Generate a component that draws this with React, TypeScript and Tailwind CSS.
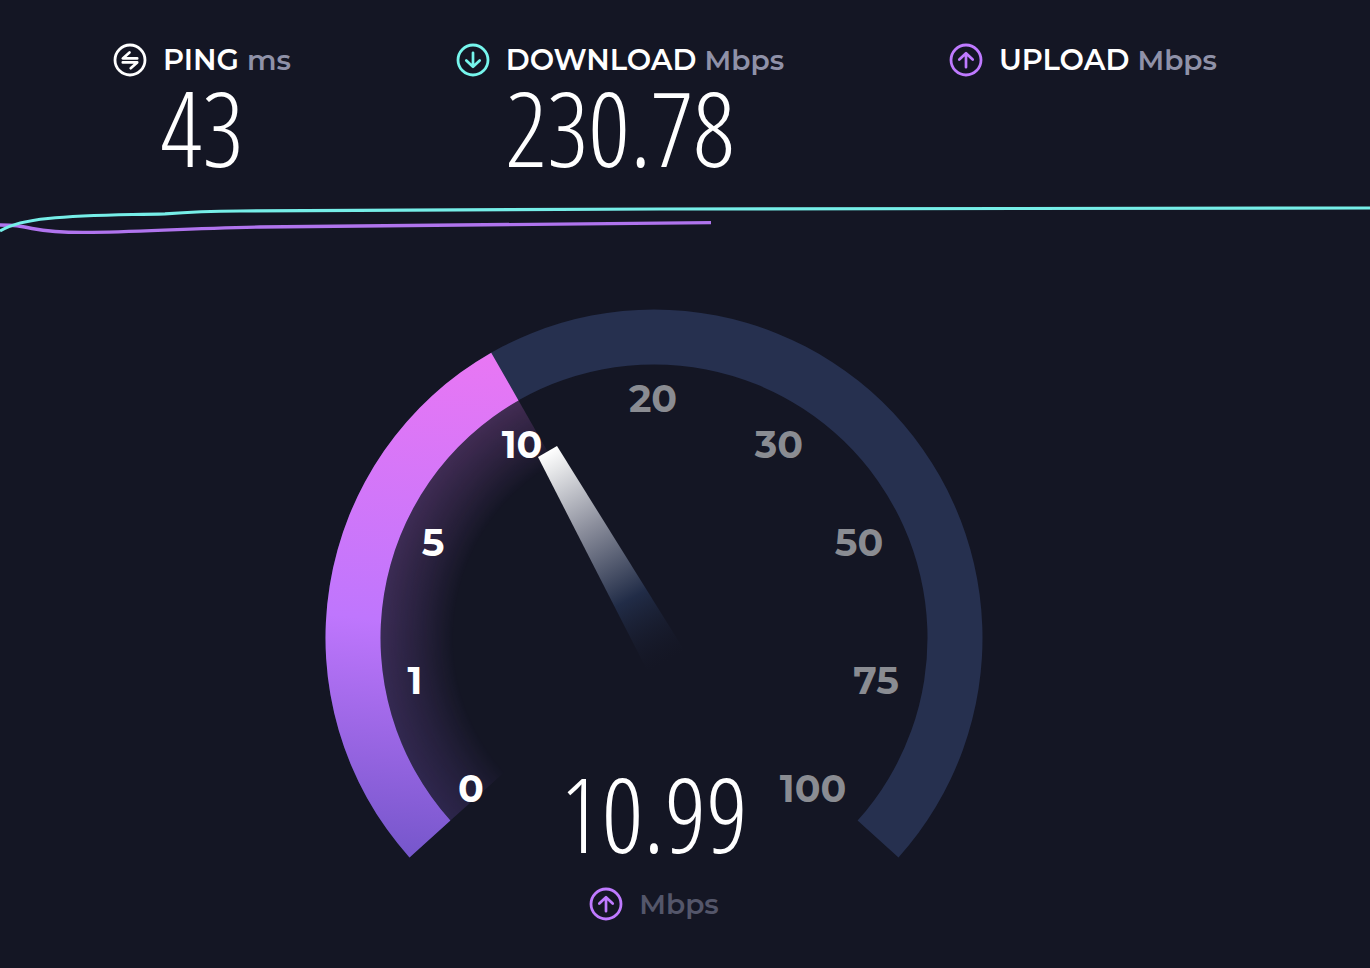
import type { ReactNode } from 'react';

const labelFont = "font-['Montserrat','Lato',sans-serif]";
const digitFont = "font-['Open_Sans_Condensed_Light','Roboto_Condensed',sans-serif] font-light";

type IconKind = 'ping' | 'download' | 'upload';

const iconPaths: Record<IconKind, string> = {
  ping: 'M16.5 9.5 L9.8 15.4 H24.2 M9.8 19.4 H24.2 L17.7 25.2',
  download: 'M17 9.8 V23.5 M10.3 17.5 L17 23.8 L23.7 17.5',
  upload: 'M17 24.2 V10.5 M10.3 16.5 L17 10.2 L23.7 16.5',
};

const iconColors: Record<IconKind, string> = {
  ping: 'text-white',
  download: 'text-[#76f5ec]',
  upload: 'text-[#bf7aff]',
};

function CircleIcon({ kind }: { kind: IconKind }) {
  return (
    <svg
      className={`size-[34px] shrink-0 ${iconColors[kind]}`}
      viewBox="0 0 34 34"
      fill="none"
      stroke="currentColor"
      strokeLinecap="round"
      strokeLinejoin="round"
      aria-hidden="true"
    >
      <circle cx="17" cy="17" r="15" strokeWidth="2.8" />
      <path d={iconPaths[kind]} strokeWidth="2.7" />
    </svg>
  );
}

function Metric({ kind, name, unit, children }: { kind: IconKind; name: string; unit: string; children?: ReactNode }) {
  return (
    <section className="flex flex-col items-center">
      <h2 className="flex items-center gap-4 text-[29px] leading-[34px]">
        <CircleIcon kind={kind} />
        <span className="flex items-baseline gap-2 font-semibold">
          {name}
          <span className="text-[28px] text-[#8f91a8]">{unit}</span>
        </span>
      </h2>
      {children && <p className={`${digitFont} text-[104px] leading-[100px]`}>{children}</p>}
    </section>
  );
}

function SpeedChart() {
  return (
    <svg
      className="block h-10 w-full"
      viewBox="0 0 1370 40"
      preserveAspectRatio="none"
      fill="none"
      role="img"
      aria-label="Speed over time"
    >
      <path
        d="M0 25 C15 25 20 26 32 28.5 C48 31.5 62 32.5 85 32.4 C140 32 180 28.5 260 27 C350 25 480 24.5 711 22.6"
        stroke="#b074ee"
        strokeWidth="3.4"
      />
      <path
        d="M0 31 C10 25 22 21 48 18.5 C85 14.5 120 15 165 13.8 C190 12 210 11.2 240 11 C340 10 500 9.5 660 9 C800 8.2 1000 8 1370 8"
        stroke="#76eee8"
        strokeWidth="3.2"
      />
    </svg>
  );
}

// Scale marks, positioned relative to the gauge centre.
const marks = [
  { value: 0, x: -183, y: 151 },
  { value: 1, x: -239, y: 43 },
  { value: 5, x: -221, y: -95 },
  { value: 10, x: -132, y: -193 },
  { value: 20, x: -1, y: -239 },
  { value: 30, x: 125, y: -193 },
  { value: 50, x: 205, y: -95 },
  { value: 75, x: 222, y: 43 },
  { value: 100, x: 159, y: 151 },
];

function Gauge({ speed }: { speed: number }) {
  return (
    <svg className="w-full" viewBox="-329 -329 658 549" role="img" aria-label="Upload speed gauge">
      <defs>
        <linearGradient id="progress" gradientUnits="userSpaceOnUse" x1="-150" y1="-285" x2="-205" y2="219">
          <stop offset="0" stopColor="#e977f4" />
          <stop offset="0.55" stopColor="#bf76fd" />
          <stop offset="1" stopColor="#7757cc" />
        </linearGradient>
        <radialGradient id="fade" gradientUnits="userSpaceOnUse" cx="0" cy="0" r="274">
          <stop offset="0.73" stopColor="#fff" stopOpacity="0" />
          <stop offset="0.86" stopColor="#fff" stopOpacity="0.12" />
          <stop offset="1" stopColor="#fff" stopOpacity="0.23" />
        </radialGradient>
        <mask id="glow" maskUnits="userSpaceOnUse" x="-329" y="-329" width="658" height="549">
          <circle r="274" fill="url(#fade)" />
        </mask>
        <linearGradient id="needle" gradientUnits="userSpaceOnUse" x1="-106" y1="-187" x2="12" y2="24">
          <stop offset="0" stopColor="#ffffff" />
          <stop offset="0.08" stopColor="#e6e7e9" />
          <stop offset="0.36" stopColor="#8b8e9c" />
          <stop offset="0.7" stopColor="#212c47" />
          <stop offset="1" stopColor="#171a2b" stopOpacity="0" />
        </linearGradient>
      </defs>
      <path
        d="M-244.5 219.4 A328.5 328.5 0 1 1 244.5 219.4 L203.6 182.6 A273.5 273.5 0 1 0 -203.6 182.6 Z"
        fill="#26304f"
      />
      <path d="M0 0 L-203.6 182.6 A273.5 273.5 0 0 1 -135.5 -237.6 Z" fill="url(#progress)" mask="url(#glow)" />
      <path
        d="M-244.5 219.4 A328.5 328.5 0 0 1 -162.8 -285.3 L-135.5 -237.6 A273.5 273.5 0 0 0 -203.6 182.6 Z"
        fill="url(#progress)"
      />
      <path d="M-116 -181 L-97 -192 L32 15 L-5 36 Z" fill="url(#needle)" />
      <g className={`${labelFont} text-[38px] font-bold`} textAnchor="middle">
        {marks.map((mark) => (
          <text key={mark.value} x={mark.x} y={mark.y + 13} fill={mark.value <= speed ? '#ffffff' : '#8a8c92'}>
            {mark.value}
          </text>
        ))}
      </g>
    </svg>
  );
}

export default function App() {
  return (
    <main className={`${labelFont} min-h-screen bg-[#141624] pb-11 pt-[43px] text-white`}>
      <header className="flex items-start justify-between pl-[113px] pr-[153px]">
        <Metric kind="ping" name="PING" unit="ms">
          43
        </Metric>
        <Metric kind="download" name="DOWNLOAD" unit="Mbps">
          230.78
        </Metric>
        <Metric kind="upload" name="UPLOAD" unit="Mbps" />
      </header>
      <div className="mt-[23px]">
        <SpeedChart />
      </div>
      <section className="mt-[69px] grid justify-center pr-[62px]">
        <div className="col-start-1 row-start-1 w-[658px] max-w-full">
          <Gauge speed={10.99} />
        </div>
        <div className="col-start-1 row-start-1 flex flex-col items-center pt-[454px]">
          <p className={`${digitFont} text-[104px] leading-[100px]`}>10.99</p>
          <p className="mt-6 flex items-center gap-4 text-[28px] font-semibold leading-[34px] text-[#54566a]">
            <CircleIcon kind="upload" />
            Mbps
          </p>
        </div>
      </section>
    </main>
  );
}
